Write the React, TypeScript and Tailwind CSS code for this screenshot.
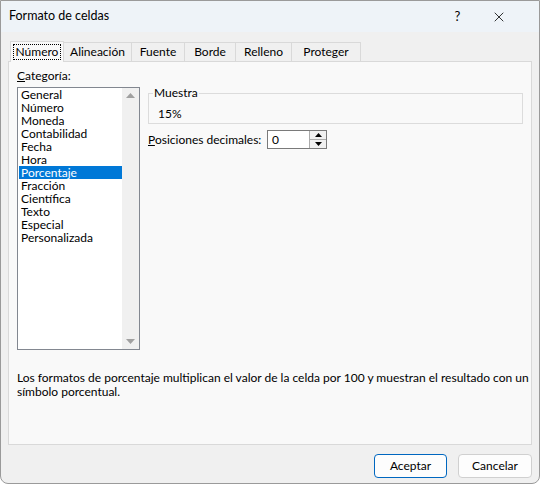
import { X } from 'lucide-react'

const categories = [
  'General',
  'Número',
  'Moneda',
  'Contabilidad',
  'Fecha',
  'Hora',
  'Porcentaje',
  'Fracción',
  'Científica',
  'Texto',
  'Especial',
  'Personalizada',
]

const tabs = [
  { label: 'Número', w: 'w-[54px]' },
  { label: 'Alineación', w: 'w-[68px]' },
  { label: 'Fuente', w: 'w-[53px]' },
  { label: 'Borde', w: 'w-[51px]' },
  { label: 'Relleno', w: 'w-[56px]' },
  { label: 'Proteger', w: 'w-[69px]' },
]

function Tab({ label, w, active }: { label: string; w: string; active?: boolean }) {
  if (active) {
    return (
      <div className={`${w} h-[21px] -mb-px px-[2px] pt-[2px] bg-[#f9f9f9] border border-b-0 border-[#d9d9d9] flex relative z-10`}>
        <span className="flex-1 text-center h-[16px] leading-[14px] border border-dotted border-black">{label}</span>
      </div>
    )
  }
  return (
    <div className={`${w} h-[19px] mt-[2px] text-center bg-[#f0f0f0] border border-b-0 border-l-0 border-[#d9d9d9] leading-[18px]`}>
      {label}
    </div>
  )
}

function Triangle({ up }: { up?: boolean }) {
  return (
    <svg width="9" height="5" viewBox="0 0 9 5">
      <path d={up ? 'M0 5 L4.5 0 L9 5 Z' : 'M0 0 L4.5 5 L9 0 Z'} fill="#a0a0a0" />
    </svg>
  )
}

export default function App() {
  return (
    <div
      className="w-[540px] h-[484px] bg-[#f0f0f0] border border-[#9a9a9a] rounded-b-[8px] flex flex-col text-[12px] text-black overflow-hidden"
      style={{ fontFamily: 'Lato, "Segoe UI", sans-serif' }}
    >
      <div className="h-[31px] bg-[#eef3f8] flex items-center shrink-0 pr-[20px]">
        <span className="pl-[8px] flex-1 text-[12.5px]">Formato de celdas</span>
        <span className="w-[41px] text-center text-[13px]">?</span>
        <span className="w-[41px] flex justify-center">
          <X size={16} strokeWidth={1.2} />
        </span>
      </div>

      <div className="flex flex-col px-[7px] pt-[8px]">
        <div className="flex items-end h-[21px] pl-[2px]">
          {tabs.map((t, i) => (
            <Tab key={t.label} label={t.label} w={t.w} active={i === 0} />
          ))}
        </div>
        <div className="h-[384px] bg-[#f9f9f9] border border-[#d9d9d9] flex flex-col pl-[8px] pt-[6px]">
          <div className="flex">
            <div className="flex flex-col w-[123px]">
              <span className="leading-[16px]">
                <span className="underline">C</span>ategoría:
              </span>
              <div className="mt-[3px] h-[263px] bg-white border border-[#828790] flex">
                <div className="flex-1 flex flex-col pl-[1px]">
                  {categories.map((c) => (
                    <div
                      key={c}
                      className={
                        c === 'Porcentaje'
                          ? 'h-[13px] leading-[13px] pl-[2px] bg-[#0078d7] text-white'
                          : 'h-[13px] leading-[13px] pl-[2px]'
                      }
                    >
                      {c}
                    </div>
                  ))}
                </div>
                <div className="w-[17px] bg-[#f0f0f0] flex flex-col justify-between items-center py-[5px]">
                  <Triangle up />
                  <Triangle />
                </div>
              </div>
            </div>

            <div className="w-[375px] flex flex-col ml-[8px] pt-[25px]">
              <div className="relative h-[31px] border border-[#dcdcdc]">
                <span className="absolute -top-[9px] left-[4px] px-[1px] bg-[#f9f9f9] leading-[16px]">Muestra</span>
                <span className="absolute left-[9px] top-[13px] leading-[14px]">15%</span>
              </div>
              <div className="flex items-center mt-[6px] h-[19px]">
                <span className="w-[119px] whitespace-nowrap">
                  <span className="underline">P</span>osiciones decimales:
                </span>
                <div className="w-[60px] h-[19px] border border-[#7a7a7a] bg-white flex">
                  <span className="flex-1 pl-[4px] leading-[17px]">0</span>
                  <div className="w-[17px] flex flex-col border-l border-[#ababab] bg-[#f0f0f0]">
                    <div className="flex-1 flex items-center justify-center border-b border-[#ababab]">
                      <svg width="7" height="4" viewBox="0 0 7 4">
                        <path d="M0 4 L3.5 0 L7 4 Z" fill="#000" />
                      </svg>
                    </div>
                    <div className="flex-1 flex items-center justify-center">
                      <svg width="7" height="4" viewBox="0 0 7 4">
                        <path d="M0 0 L3.5 4 L7 0 Z" fill="#000" />
                      </svg>
                    </div>
                  </div>
                </div>
              </div>
            </div>
          </div>

          <p className="mt-[21px] leading-[14px] w-[514px]">
            Los formatos de porcentaje multiplican el valor de la celda por 100 y muestran el resultado con un
            símbolo porcentual.
          </p>
        </div>
      </div>

      <div className="flex justify-end gap-[11px] pr-[7px] pt-[9px]">
        <button className="w-[73px] h-[24px] bg-[#fdfdfd] border border-[#0067c0] rounded-[4px]">Aceptar</button>
        <button className="w-[74px] h-[24px] bg-[#fdfdfd] border border-[#d0d0d0] rounded-[4px]">Cancelar</button>
      </div>
    </div>
  )
}
